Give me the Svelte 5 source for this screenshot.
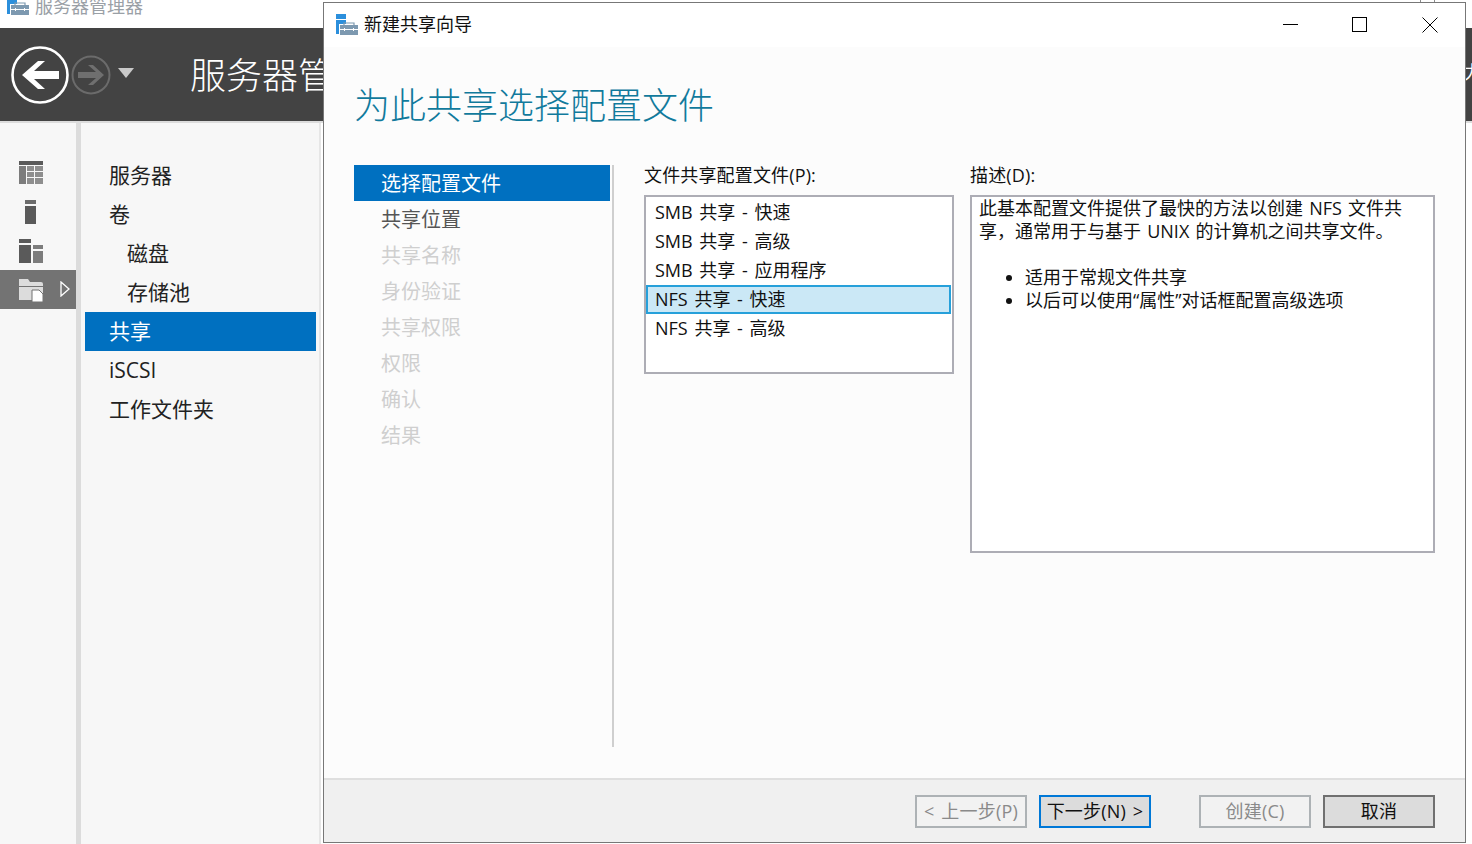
<script>
    const railIcons = ['grid', 'single', 'split', 'folder'];
    const nav = [
        { label: '服务器' },
        { label: '卷' },
        { label: '磁盘', sub: true },
        { label: '存储池', sub: true },
        { label: '共享', active: true },
        { label: 'iSCSI' },
        { label: '工作文件夹' }
    ];
    const steps = ['选择配置文件', '共享位置', '共享名称', '身份验证', '共享权限', '权限', '确认', '结果'];
    const profiles = ['SMB 共享 - 快速', 'SMB 共享 - 高级', 'SMB 共享 - 应用程序', 'NFS 共享 - 快速', 'NFS 共享 - 高级'];
    let selected = 3;
</script>

{#snippet caseIcon()}
    <svg class="appicon" viewBox="0 0 22 22" width="22" height="22">
        <rect x="0" y="0" width="10" height="20" fill="#2b8fdc" />
        <rect x="0" y="5" width="10" height="1" fill="#fff" />
        <rect x="3" y="10" width="20" height="12" fill="#fff" />
        <rect x="4" y="11" width="18" height="10" fill="#7d99b0" />
        <path d="M8 11V9h10v2" fill="none" stroke="#7d99b0" stroke-width="1.2" />
        <rect x="4" y="15" width="18" height="1" fill="#fff" />
        <rect x="8" y="14" width="1" height="3" fill="#fff" />
        <rect x="17" y="14" width="1" height="3" fill="#fff" />
    </svg>
{/snippet}

<div class="desktop">
    <div class="manager">
        <div class="mgr-title">
            <div class="mgr-icon">{@render caseIcon()}</div>
            <span>服务器管理器</span>
            <div class="peek"></div>
        </div>
        <div class="mgr-head">
            <svg class="back" viewBox="0 0 58 58" width="58" height="58">
                <circle cx="29" cy="29" r="27.5" fill="none" stroke="#fff" stroke-width="2.6" />
                <path d="M11 29 27 15h7L23 25h25v8H23l11 10h-7z" fill="#fff" />
            </svg>
            <svg class="fwd" viewBox="0 0 40 40" width="40" height="40">
                <circle cx="20" cy="20" r="18.5" fill="none" stroke="#6b6b6b" stroke-width="2" />
                <path d="M33 20 22 10h-5l8 7H7v6h18l-8 7h5z" fill="#6f6f6f" />
            </svg>
            <svg class="drop" viewBox="0 0 16 10" width="16" height="10"><path d="M0 0h16L8 10z" fill="#c9c9c9" /></svg>
            <div class="mgr-name">服务器管理器</div>
        </div>
        <div class="mgr-body">
            <div class="rail">
                {#each railIcons as icon}
                    <div class="rail-item" class:on={icon === 'folder'}>
                        <svg viewBox="0 0 24 24" width="24" height="24">
                            {#if icon === 'grid'}
                                <rect x="0" y="0" width="24" height="4" fill="#5a5a5a" />
                                <rect x="0" y="5" width="7" height="18" fill="#7c7c7c" />
                                <rect x="8" y="5" width="7" height="5" fill="#8e8e8e" />
                                <rect x="16" y="5" width="8" height="5" fill="#8e8e8e" />
                                <rect x="8" y="11" width="7" height="5" fill="#8e8e8e" />
                                <rect x="16" y="11" width="8" height="5" fill="#8e8e8e" />
                                <rect x="8" y="17" width="7" height="6" fill="#8e8e8e" />
                                <rect x="16" y="17" width="8" height="6" fill="#8e8e8e" />
                            {:else if icon === 'single'}
                                <rect x="6" y="0" width="11" height="4" fill="#6c6c6c" />
                                <rect x="6" y="6" width="11" height="18" fill="#5a5a5a" />
                            {:else if icon === 'split'}
                                <rect x="0" y="0" width="12" height="4" fill="#5a5a5a" />
                                <rect x="0" y="6" width="12" height="18" fill="#5a5a5a" />
                                <rect x="14" y="6" width="10" height="4" fill="#7c7c7c" />
                                <rect x="14" y="12" width="10" height="12" fill="#7c7c7c" />
                            {:else}
                                <path d="M0 4V1h9l2 3h11a2 2 0 0 1 2 2v2H0z" fill="#dcdcdc" />
                                <rect x="0" y="9" width="24" height="13" fill="#dcdcdc" />
                                <path d="M13 12h7l4 4v8H13z" fill="#fff" stroke="#737373" stroke-width="1" />
                            {/if}
                        </svg>
                        {#if icon === 'folder'}
                            <svg class="caret" viewBox="0 0 10 16" width="10" height="16"><path d="M1 1l8 7-8 7z" fill="none" stroke="#fff" stroke-width="1.3" /></svg>
                        {/if}
                    </div>
                {/each}
            </div>
            <div class="nav">
                {#each nav as item}
                    <div class="nav-item" class:sub={item.sub} class:active={item.active}>{item.label}</div>
                {/each}
            </div>
        </div>
    </div>

    <div class="strip">
        <span class="strip-text">力</span>
    </div>

    <div class="dialog">
        <div class="titlebar">
            <div class="dlg-icon">{@render caseIcon()}</div>
            <span class="dlg-title">新建共享向导</span>
            <div class="winbtns">
                <svg viewBox="0 0 16 16" width="16" height="16"><path d="M0 7.5h15" stroke="#000" stroke-width="1" /></svg>
                <svg viewBox="0 0 16 16" width="16" height="16"><rect x="0.5" y="0.5" width="14" height="14" fill="none" stroke="#000" stroke-width="1" /></svg>
                <svg class="close" viewBox="0 0 16 16" width="16" height="16"><path d="M0.5 0.5 15.5 15.5M15.5 0.5 0.5 15.5" stroke="#000" stroke-width="1" /></svg>
            </div>
        </div>
        <div class="content">
            <h1>为此共享选择配置文件</h1>
            <div class="columns">
                <div class="steps">
                    {#each steps as step, i}
                        <div class="step" class:current={i === 0} class:off={i > 1}>{step}</div>
                    {/each}
                </div>
                <div class="pane left">
                    <div class="label">文件共享配置文件(P):</div>
                    <div class="listbox">
                        {#each profiles as p, i}
                            <div class="option" class:sel={i === selected}>{p}</div>
                        {/each}
                    </div>
                </div>
                <div class="pane right">
                    <div class="label">描述(D):</div>
                    <div class="desc">
                        <p>此基本配置文件提供了最快的方法以创建 NFS 文件共享，通常用于与基于 UNIX 的计算机之间共享文件。</p>
                        <ul>
                            <li>适用于常规文件共享</li>
                            <li>以后可以使用“属性”对话框配置高级选项</li>
                        </ul>
                    </div>
                </div>
            </div>
        </div>
        <div class="footer">
            <button class="btn off">&lt; 上一步(P)</button>
            <button class="btn next">下一步(N) &gt;</button>
            <button class="btn off create">创建(C)</button>
            <button class="btn cancel">取消</button>
        </div>
    </div>
</div>

<style>
    :global(body) {
        margin: 0;
        overflow: hidden;
    }
    .desktop {
        position: relative;
        width: 1472px;
        height: 844px;
        overflow: hidden;
        background: #fff;
        font-family: "Open Sans", "Noto Sans CJK SC", sans-serif;
        color: #111;
    }
    .manager {
        display: flex;
        flex-direction: column;
        width: 1472px;
        height: 844px;
    }
    .mgr-title {
        height: 28px;
        background: #fff;
        position: relative;
        overflow: hidden;
        flex: none;
    }
    .mgr-icon {
        position: absolute;
        left: 7px;
        top: -6px;
    }
    .mgr-title span {
        position: absolute;
        left: 35px;
        top: -6px;
        font-size: 18px;
        line-height: 24px;
        color: #9aa0a6;
    }
    .peek {
        position: absolute;
        left: 1420px;
        top: 0;
        width: 13px;
        height: 3px;
        border: solid #8a8a8a;
        border-width: 0 1px;
    }
    .mgr-head {
        display: flex;
        align-items: center;
        height: 93px;
        background: #434343;
        padding-left: 11px;
        flex: none;
    }
    .back {
        flex: none;
        margin-top: 1px;
    }
    .fwd {
        flex: none;
        margin-left: 2px;
        margin-top: 1px;
    }
    .drop {
        flex: none;
        margin-left: 7px;
        margin-top: -3px;
    }
    .mgr-name {
        margin-left: 56px;
        margin-top: 2px;
        font-size: 36px;
        line-height: 44px;
        color: #fff;
        font-weight: 300;
        white-space: nowrap;
    }
    .mgr-body {
        display: flex;
        flex: 1;
        border-top: 2px solid #dcdcdc;
        background: #fff;
    }
    .rail {
        width: 76px;
        flex: none;
        padding-top: 30px;
        background: #f7f7f7;
    }
    .rail-item {
        position: relative;
        display: flex;
        height: 39px;
        align-items: center;
        padding-left: 19px;
    }
    .rail-item.on {
        background: #737373;
    }
    .caret {
        position: absolute;
        left: 60px;
        top: 11px;
    }
    .nav {
        width: 234px;
        flex: none;
        border-left: 5px solid #dcdcdc;
        border-right: 2px solid #e6e6e6;
        background: #f7f7f7;
        padding: 33px 0 0 4px;
    }
    .nav-item {
        width: 231px;
        box-sizing: border-box;
        height: 39px;
        line-height: 39px;
        font-size: 21px;
        padding-left: 24px;
        color: #222;
    }
    .nav-item.sub {
        padding-left: 42px;
    }
    .nav-item.active {
        background: #0070c0;
        color: #fff;
    }
    .strip {
        position: absolute;
        left: 1466px;
        top: 28px;
        width: 6px;
        height: 93px;
        overflow: hidden;
    }
    .strip-text {
        position: absolute;
        left: -2px;
        top: 32px;
        font-size: 18px;
        line-height: 24px;
        color: #fff;
    }
    .dialog {
        position: absolute;
        left: 323px;
        top: 2px;
        width: 1143px;
        height: 841px;
        box-sizing: border-box;
        border: 1px solid #777;
        display: flex;
        flex-direction: column;
        background: #fcfcfc;
    }
    .titlebar {
        position: relative;
        display: flex;
        align-items: center;
        height: 44px;
        background: #fff;
        flex: none;
        padding-left: 12px;
    }
    .dlg-icon {
        display: flex;
    }
    .dlg-title {
        margin-left: 6px;
        margin-top: -2px;
        font-size: 18px;
        line-height: 24px;
        color: #111;
    }
    .winbtns {
        margin-left: auto;
        display: flex;
        gap: 53px;
        padding-right: 27px;
    }
    .close {
        margin-left: 1px;
    }
    h1 {
        margin: 0;
        font-weight: 300;
        font-size: 36px;
        line-height: 48px;
        color: #117a9c;
        padding: 35px 0 0 30px;
    }
    .content {
        flex: 1;
    }
    .columns {
        display: flex;
        margin-top: 35px;
        padding-left: 30px;
    }
    .steps {
        width: 256px;
        height: 582px;
        padding-right: 2px;
        border-right: 2px solid #cfcfcf;
        flex: none;
    }
    .step {
        height: 36px;
        line-height: 38px;
        font-size: 20px;
        padding-left: 27px;
        color: #555;
    }
    .step.current {
        background: #0070c0;
        color: #fff;
    }
    .step.off {
        color: #cfcfcf;
    }
    .pane.left {
        margin-left: 30px;
        width: 310px;
    }
    .pane.right {
        margin-left: 16px;
        width: 465px;
    }
    .label {
        font-size: 18px;
        line-height: 20px;
        height: 30px;
        color: #111;
        letter-spacing: 0.15px;
    }
    .listbox {
        box-sizing: border-box;
        width: 310px;
        height: 179px;
        border: 2px solid #adadb5;
        background: #fff;
        padding: 1px 1px 0 0;
    }
    .option {
        height: 29px;
        line-height: 28px;
        font-size: 18px;
        word-spacing: 2px;
        padding-left: 9px;
        box-sizing: border-box;
        color: #111;
    }
    .option.sel {
        background: #cbe8f6;
        border: 2px solid #26a0da;
        padding-left: 7px;
        line-height: 25px;
    }
    .desc {
        box-sizing: border-box;
        height: 358px;
        border: 2px solid #adadb5;
        background: #fff;
        padding: 0 8px 0 7px;
        font-size: 18px;
        word-spacing: 1.5px;
        line-height: 23px;
    }
    .desc p {
        margin: 0;
    }
    .desc ul {
        margin: 23px 0 0;
        padding-left: 46px;
    }
    .footer {
        display: flex;
        align-items: flex-start;
        height: 64px;
        flex: none;
        box-sizing: border-box;
        background: #f0f0f0;
        border-top: 2px solid #dfdfdf;
        padding: 15px 30px 0 0;
        justify-content: flex-end;
    }
    .btn {
        width: 112px;
        height: 33px;
        box-sizing: border-box;
        font-family: inherit;
        font-size: 18px;
        line-height: 27px;
        word-spacing: 2px;
        letter-spacing: 0.2px;
        padding: 0;
        white-space: nowrap;
        background: #dcdcdc;
        border: 2px solid #707070;
        color: #111;
    }
    .btn.off {
        background: #f2f2f2;
        border-color: #adb2b5;
        color: #8a8a8a;
    }
    .btn.next {
        margin-left: 12px;
        border-color: #0078d7;
    }
    .btn.create {
        margin-left: 48px;
    }
    .btn.cancel {
        margin-left: 12px;
    }
</style>
